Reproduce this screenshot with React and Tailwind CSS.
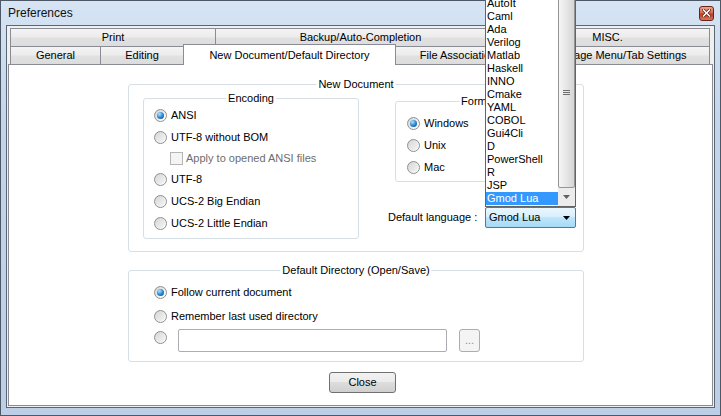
import React from "react";

const Radio = ({ checked }) => (
  <span className="w-[13px] h-[13px] shrink-0 rounded-full border border-[#8e8f8f] bg-[linear-gradient(135deg,#cfcfcf,#f7f7f7_70%,#ffffff)] flex items-center justify-center">
    <span
      className={
        checked
          ? "w-[7px] h-[7px] rounded-full bg-[radial-gradient(circle_at_35%_30%,#b4e3ff,#2a8ad6_50%,#0b3f73)]"
          : "w-[9px] h-[9px] rounded-full bg-[linear-gradient(135deg,#d9d9d9,#f4f4f4)]"
      }
    />
  </span>
);

const Legend = ({ children }) => (
  <span className="absolute -top-[7px] left-1/2 -translate-x-1/2 px-[2px] bg-white whitespace-nowrap leading-[13px]">
    {children}
  </span>
);

const RadioRow = ({ checked, label }) => (
  <div className="h-[22px] flex items-center gap-[4px]">
    <Radio checked={checked} />
    <span>{label}</span>
  </div>
);

const Tab = ({ className, children }) => (
  <div
    className={
      "h-[18px] shrink-0 flex items-center justify-center border-t border-[#898c95] bg-[linear-gradient(#f4f4f4,#ececec_45%,#e1e1e1_55%,#dcdcdc)] " +
      className
    }
  >
    {children}
  </div>
);

const langs = [
  "AutoIt",
  "Caml",
  "Ada",
  "Verilog",
  "Matlab",
  "Haskell",
  "INNO",
  "Cmake",
  "YAML",
  "COBOL",
  "Gui4Cli",
  "D",
  "PowerShell",
  "R",
  "JSP",
  "Gmod Lua",
];

export default function App() {
  return (
    <div className="relative w-[721px] h-[416px] border border-[#4d5866] bg-[linear-gradient(#d6e4f4,#c2d5eb_30%,#bccfe7)] flex flex-col font-['Liberation_Sans',Arial,sans-serif] text-[11px] leading-[13px] text-black">
      {/* Title bar */}
      <div className="h-[24px] shrink-0 flex items-center justify-between pl-[7px] pr-[6px]">
        <span className="text-[12px] text-[#111]">Preferences</span>
        <div className="w-[15px] h-[15px] rounded-[3px] border border-[#6a2317] bg-[linear-gradient(#eba58f,#d56a4f_45%,#c13b20_55%,#d77858)] flex items-center justify-center">
          <svg width="9" height="8" viewBox="0 0 9 8">
            <path d="M1.5 1L7.5 7M7.5 1L1.5 7" stroke="#5a2014" strokeWidth="3" strokeLinecap="square" />
            <path d="M1.5 1L7.5 7M7.5 1L1.5 7" stroke="#ffffff" strokeWidth="1.5" strokeLinecap="square" />
          </svg>
        </div>
      </div>

      {/* Client area */}
      <div className="flex-1 min-h-0 mx-[5px] mb-[7px] border border-[#5d6670] bg-[#f0f0f0] p-px flex flex-col">
        {/* Tabs */}
        <div className="shrink-0 pt-px px-[2px] flex flex-col">
          <div className="flex h-[18px]">
            <Tab className="w-[205px] border-l">Print</Tab>
            <Tab className="w-[290px] border-l">Backup/Auto-Completion</Tab>
            <Tab className="w-[205px] border-l border-r">MISC.</Tab>
          </div>
          <div className="flex h-[18px] items-start">
            <Tab className="w-[90px] border-l">General</Tab>
            <Tab className="w-[83px] border-l">Editing</Tab>
            <div className="relative z-10 -mt-[2px] w-[213px] h-[21px] shrink-0 bg-white border-t border-x border-[#898c95] flex items-start justify-center pt-[4px]">
              New Document/Default Directory
            </div>
            <Tab className="w-[124px]">File Association</Tab>
            <Tab className="w-[190px] border-l border-r">Language Menu/Tab Settings</Tab>
          </div>
        </div>

        {/* Panel */}
        <div className="flex-1 min-h-0 border border-[#898c95] bg-white pl-[119px] pt-[19px] flex flex-col">
          {/* New Document group */}
          <div className="relative w-[456px] h-[168px] shrink-0 border border-[#d5dfe5] rounded-[3px] flex items-start">
            <Legend>New Document</Legend>

            {/* Encoding */}
            <div className="relative ml-[14px] mt-[13px] w-[216px] h-[141px] shrink-0 border border-[#d5dfe5] rounded-[3px] pt-[5px] pl-[10px] flex flex-col">
              <Legend>Encoding</Legend>
              <RadioRow checked label="ANSI" />
              <RadioRow label="UTF-8 without BOM" />
              <div className="h-[20px] flex items-center gap-[3px] pl-[16px]">
                <span className="w-[13px] h-[13px] border border-[#b5b5b5] bg-[#f4f4f4]" />
                <span className="text-[#6d6d6d]">Apply to opened ANSI files</span>
              </div>
              <RadioRow label="UTF-8" />
              <RadioRow label="UCS-2 Big Endian" />
              <RadioRow label="UCS-2 Little Endian" />
            </div>

            {/* Right column */}
            <div className="ml-[29px] mt-[16px] flex flex-col">
              <div className="relative ml-[7px] w-[167px] h-[81px] border border-[#d5dfe5] rounded-[3px] pt-[10px] pl-[11px] flex flex-col">
                <Legend>Format</Legend>
                <RadioRow checked label="Windows" />
                <RadioRow label="Unix" />
                <RadioRow label="Mac" />
              </div>
              <div className="mt-[25px] flex items-center">
                <span className="w-[97px] shrink-0">Default language :</span>
                <div className="w-[91px] h-[21px] rounded-[2px] border border-[#3c7fb1] bg-[linear-gradient(#eaf6fd,#d9f0fc_45%,#bee6fd_50%,#a7d9f5)] flex items-center justify-between pl-[3px] pr-[5px]">
                  <span>Gmod Lua</span>
                  <svg width="7" height="4" viewBox="0 0 7 4">
                    <path d="M0 0H7L3.5 4Z" fill="#000" />
                  </svg>
                </div>
              </div>
            </div>
          </div>

          {/* Default Directory group */}
          <div className="relative mt-[18px] w-[456px] h-[92px] shrink-0 border border-[#d5dfe5] rounded-[3px] pt-[10px] pl-[25px] flex flex-col">
            <Legend>Default Directory (Open/Save)</Legend>
            <RadioRow checked label="Follow current document" />
            <div className="mt-[2px]">
              <RadioRow label="Remember last used directory" />
            </div>
            <div className="mt-[2px] flex items-start">
              <div className="mt-[2px]">
                <Radio />
              </div>
              <div className="ml-[11px] w-[269px] h-[23px] rounded-[2px] border border-[#abadb3] bg-white" />
              <div className="ml-[12px] w-[21px] h-[23px] rounded-[3px] border border-[#adadad] bg-[#f4f4f4] flex items-center justify-center text-[#8d8d8d]">
                ...
              </div>
            </div>
          </div>

          {/* Close button */}
          <div className="mt-[10px] ml-[201px] w-[67px] h-[21px] shrink-0 rounded-[3px] border border-[#707070] bg-[linear-gradient(#f2f2f2,#ebebeb_45%,#dddddd_50%,#cfcfcf)] flex items-center justify-center">
            Close
          </div>
        </div>
      </div>

      {/* Open dropdown list */}
      <div className="absolute left-[484px] top-[-1px] w-[91px] h-[207px] border-x border-b border-[#646464] bg-white flex overflow-hidden z-20">
        <div className="w-[72px] shrink-0 -mt-[3px] flex flex-col">
          {langs.map((l) => (
            <div
              key={l}
              className={
                l === "Gmod Lua"
                  ? "h-[13px] shrink-0 pl-[1px] bg-[#3399ff] text-white leading-[13px] whitespace-nowrap"
                  : "h-[13px] shrink-0 pl-[1px] leading-[13px] whitespace-nowrap"
              }
            >
              {l}
            </div>
          ))}
        </div>
        <div className="w-[17px] shrink-0 bg-[#ececec] flex flex-col">
          <div className="-mt-[3px] h-[191px] shrink-0 mx-[0px] rounded-[2px] border border-[#959595] bg-[linear-gradient(90deg,#f5f5f5,#e6e6e6_50%,#d6d6d6)] flex flex-col items-center justify-center gap-[1px]">
            <span className="w-[7px] h-px bg-[#6f6f6f]" />
            <span className="w-[7px] h-px bg-[#6f6f6f]" />
            <span className="w-[7px] h-px bg-[#6f6f6f]" />
          </div>
          <div className="flex-1 flex items-center justify-center">
            <svg width="7" height="4" viewBox="0 0 7 4">
              <path d="M0 0H7L3.5 4Z" fill="#606060" />
            </svg>
          </div>
        </div>
      </div>
    </div>
  );
}
